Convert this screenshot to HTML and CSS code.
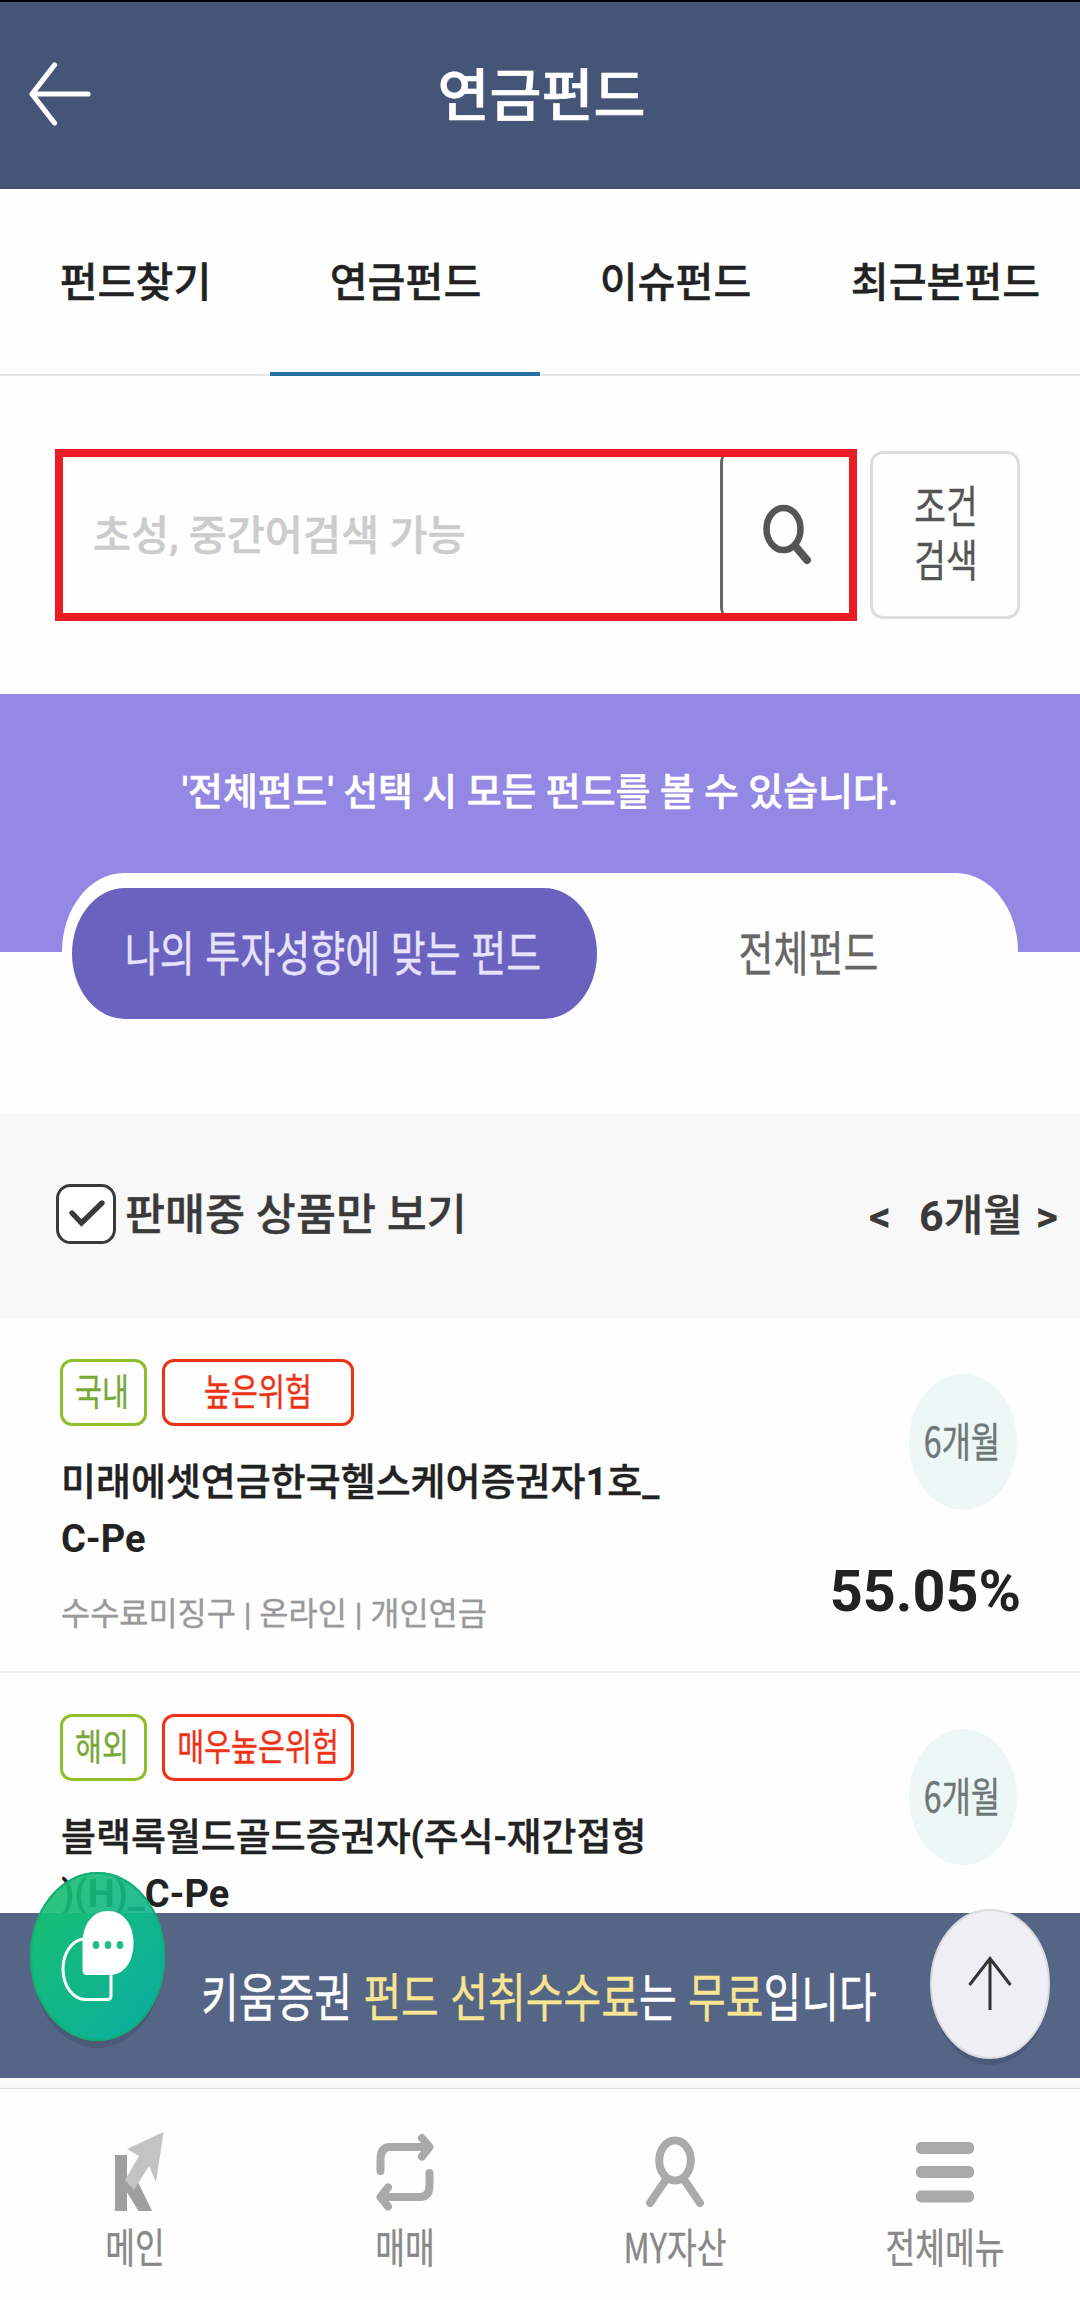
FILE: index.html
```html
<!DOCTYPE html>
<html lang="ko">
<head>
<meta charset="utf-8">
<title>연금펀드</title>
<link rel="stylesheet" href="styles.css">
</head>
<body>
<div class="app">
  <header class="header">
    <svg class="back" width="64" height="66" viewBox="0 0 64 66"><path d="M27.500 4 5 33l22.500 29M5 33h56" fill="none" stroke="#fff" stroke-width="5.200" stroke-linecap="round" stroke-linejoin="round"/></svg>
    <h1 class="title">연금펀드</h1>
  </header>

  <nav class="tabs">
    <a class="tab">펀드찾기</a>
    <a class="tab active">연금펀드</a>
    <a class="tab">이슈펀드</a>
    <a class="tab">최근본펀드</a>
  </nav>

  <section class="search">
    <div class="search-box">
      <span class="placeholder">초성, 중간어검색 가능</span>
      <span class="search-button">
        <svg width="52" height="64" viewBox="0 0 52 64"><ellipse cx="21.500" cy="26" rx="17" ry="21" fill="none" stroke="#555" stroke-width="6.500"/><path d="M34 44 45 57" stroke="#555" stroke-width="8" stroke-linecap="round"/></svg>
      </span>
    </div>
    <div class="condition"><span class="tall">조건<br>검색</span></div>
  </section>

  <section class="scope">
    <p class="notice">'전체펀드' 선택 시 모든 펀드를 볼 수 있습니다.</p>
    <div class="switch">
      <div class="option selected"><span class="tall">나의 투자성향에 맞는 펀드</span></div>
      <div class="option all"><span class="tall">전체펀드</span></div>
    </div>
  </section>

  <section class="filter">
    <svg class="checkbox" width="60" height="60" viewBox="0 0 60 60"><rect x="1.500" y="1.500" width="57" height="57" rx="13" fill="#fff" stroke="#3a3a3a" stroke-width="3"/><path d="M16 29l9.500 10L46 19" fill="none" stroke="#3a3a3a" stroke-width="5.400" stroke-linecap="round"/></svg>
    <span class="filter-label">판매중 상품만 보기</span>
    <span class="period"><b>&lt;</b><span class="months"><b>6</b>개월</span><b>&gt;</b></span>
  </section>

  <main class="list">
    <article class="fund">
      <div class="info">
        <div class="badges"><span class="badge region"><i class="tall">국내</i></span><span class="badge risk"><i class="tall">높은위험</i></span></div>
        <h2 class="name">미래에셋연금한국헬스케어증권자<b>1</b>호_<br><b>C-Pe</b></h2>
        <p class="meta">수수료미징구 | 온라인 | 개인연금</p>
      </div>
      <div class="yield"><span class="term"><i class="tall">6개월</i></span><strong class="rate">55.05%</strong></div>
    </article>
    <article class="fund">
      <div class="info">
        <div class="badges"><span class="badge region"><i class="tall">해외</i></span><span class="badge risk"><i class="tall">매우높은위험</i></span></div>
        <h2 class="name">블랙록월드골드증권자(주식-재간접형<br><b>)(H)_C-Pe</b></h2>
      </div>
      <div class="yield"><span class="term"><i class="tall">6개월</i></span></div>
    </article>
  </main>

  <aside class="banner">
    <p class="banner-text tall">키움증권 <em>펀드 선취수수료</em>는 <em>무료</em>입니다</p>
  </aside>

  <footer class="bottom-nav">
    <a class="nav-item">
      <svg width="60" height="84" viewBox="0 0 60 84"><path d="M10 26H22V82H10zM20 53 32 51 47 82H33.500L20 60z" fill="#9f9f9f"/><path d="M58.500 3 22 20l12 7L20 51l9 10 15-24 7 16z" fill="#c3c3c3"/></svg>
      <span class="tall">메인</span>
    </a>
    <a class="nav-item">
      <svg width="60" height="84" viewBox="0 0 60 84"><path d="M5.500 42V31Q5.500 18 15 18H54M47 9l7.500 9L47 27.500M54.500 44V56Q54.500 68 45 68H6M13 58.500 5.500 68l7.500 9.500" fill="none" stroke="#aaa" stroke-width="8" stroke-linecap="round" stroke-linejoin="round"/></svg>
      <span class="tall">매매</span>
    </a>
    <a class="nav-item">
      <svg width="60" height="84" viewBox="0 0 60 84"><ellipse cx="30" cy="31.500" rx="15.800" ry="20" fill="none" stroke="#aaa" stroke-width="8"/><path d="M20 52 5 74M40 52 55 74" fill="none" stroke="#aaa" stroke-width="8" stroke-linecap="round"/></svg>
      <span class="tall">MY자산</span>
    </a>
    <a class="nav-item">
      <svg width="60" height="84" viewBox="0 0 60 84"><g fill="#aaa"><rect x="1" y="13" width="58" height="12" rx="5"/><rect x="1" y="37" width="58" height="12" rx="5"/><rect x="1" y="61.500" width="58" height="12" rx="5"/></g></svg>
      <span class="tall">전체메뉴</span>
    </a>
  </footer>

  <svg class="chat" width="136" height="180" viewBox="0 0 136 180">
    <defs>
      <linearGradient id="green" x1="0" y1="0" x2="1" y2="1"><stop offset="0.150" stop-color="#18be73"/><stop offset="0.850" stop-color="#0baf9c"/></linearGradient>
      <clipPath id="above-banner"><rect width="136" height="41"/></clipPath>
      <clipPath id="over-banner"><rect y="41" width="136" height="139"/></clipPath>
    </defs>
    <ellipse cx="67.500" cy="92" rx="65" ry="84" fill="#485570" opacity=".7" clip-path="url(#over-banner)"/>
    <ellipse cx="67.500" cy="84.500" rx="67.500" ry="84.500" fill="url(#green)" clip-path="url(#over-banner)"/>
    <ellipse cx="67.500" cy="84.500" rx="67.500" ry="84.500" fill="url(#green)" opacity=".91" clip-path="url(#above-banner)"/>
    <ellipse cx="67.500" cy="84.500" rx="66.500" ry="83.500" fill="none" stroke="#13ad76" stroke-width="2"/>
    <path d="M53 67C41 69 33 82 33 97C33 114 43 127.500 56 127.500H77Q81 127.500 81 123.500V102" fill="none" stroke="#fff" stroke-width="3"/>
    <path d="M52.500 71C52.500 52 63 39 78 39C93 39 103.500 52 103.500 71C103.500 90 94 103 79 103H57Q52.500 103 52.500 98z" fill="#fff"/>
    <g fill="#22bd8b"><ellipse cx="66" cy="73" rx="3.300" ry="4"/><ellipse cx="78" cy="73" rx="3.300" ry="4"/><ellipse cx="90" cy="73" rx="3.300" ry="4"/></g>
  </svg>

  <svg class="to-top" width="120" height="160" viewBox="0 0 120 160">
    <ellipse cx="60" cy="81" rx="58" ry="75" fill="#4b5a79"/>
    <ellipse cx="60" cy="75" rx="59" ry="74" fill="#eeeff4" stroke="#d9dadd" stroke-width="2"/>
    <path d="M60 50V101M39.500 76 60 49.500 80.500 76" fill="none" stroke="#333" stroke-width="3"/>
  </svg>
</div>
</body>
</html>
```
FILE: styles.css
```css
* { box-sizing: border-box; margin: 0; padding: 0; }

body {
  width: 1080px;
  background: #fefefe;
  color: #222;
  font-family: Roboto, "Noto Sans CJK KR", sans-serif;
  font-weight: 500;
}

b { font-weight: 700; -webkit-text-stroke: 0; }

.app {
  position: relative;
  width: 1080px;
  height: 2300px;
  overflow: hidden;
  display: flex;
  flex-direction: column;
}

/* Labels drawn with condensed, tall letters */
.tall {
  display: block;
  font-family: "Noto Sans CJK KR", sans-serif;
  font-style: normal;
  font-weight: 400;
  white-space: nowrap;
  transform: scaleY(1.27);
  -webkit-text-stroke: 0.3px;
}

.header {
  flex: none;
  height: 189px;
  border-top: 2px solid #000;
  border-bottom: 2px solid #404c69;
  background: #445578;
  display: grid;
  grid-template-columns: 120px 1fr 120px;
  align-items: center;
}
.back { margin: -2px 0 0 27px; }
.title {
  padding: 4px 0 0 3px;
  color: #fff;
  font-size: 56.500px;
  font-weight: 500;
  line-height: 80px;
  text-align: center;
  -webkit-text-stroke: 0.6px;
}

.tabs {
  flex: none;
  height: 187px;
  display: grid;
  grid-template-columns: repeat(4, 1fr);
  box-shadow: inset 0 -2px #e5e5e5;
}
.tab {
  height: 187px;
  padding-left: 1px;
  font-size: 41.200px;
  line-height: 189px;
  text-align: center;
  white-space: nowrap;
  -webkit-text-stroke: 0.4px;
}
.tab.active { box-shadow: inset 0 -4px #2571a1; }

.search {
  flex: none;
  height: 318px;
  padding: 73px 60px 0 55px;
  display: flex;
  align-items: flex-start;
  gap: 13px;
}
.search-box {
  width: 802px;
  height: 172px;
  border: 8px solid #ed1c24;
  display: flex;
  justify-content: space-between;
  overflow: hidden;
}
.placeholder {
  padding-left: 30px;
  color: #ccc;
  font-size: 41.400px;
  line-height: 158px;
  -webkit-text-stroke: 0.5px;
}
.search-button {
  width: 129px;
  height: 172px;
  margin-top: -8px;
  border-left: 3px solid #666;
  border-radius: 14px;
  display: flex;
  align-items: center;
  padding-left: 39px;
}
.condition {
  width: 150px;
  height: 168px;
  margin-top: 2px;
  padding: 0 0 8px 2px;
  border: 3px solid #ddd;
  border-radius: 13px;
  color: #555;
  display: flex;
  align-items: center;
  justify-content: center;
  font-size: 34.500px;
  line-height: 41.500px;
}

.scope {
  flex: none;
  height: 419px;
  padding: 0 62px;
  background: linear-gradient(#9389e4 258px, #fefefe 258px);
}
.notice {
  height: 179px;
  color: #fff;
  font-size: 37.900px;
  line-height: 196px;
  text-align: center;
  white-space: nowrap;
  -webkit-text-stroke: 0.5px;
}
.switch {
  height: 156px;
  padding: 15px 10px 0;
  border-radius: 62px 62px 0 0 / 79px 79px 0 0;
  background: #fefefe;
  display: flex;
}
.option {
  flex: 1;
  height: 131px;
  display: flex;
  justify-content: center;
  color: #666;
  font-size: 38px;
  line-height: 125px;
}
.option.selected {
  flex: none;
  width: 525px;
  padding-right: 3px;
  border-radius: 53px / 65.500px;
  background: #6b61bf;
  color: #e6e3fa;
}
.option.all { padding-left: 12px; }

.filter {
  flex: none;
  height: 206px;
  padding: 0 22px 0 56px;
  background: #f8f8f8;
  color: #3a3a3a;
  display: flex;
  align-items: center;
  -webkit-text-stroke: 0.4px;
}
.checkbox { margin-top: -4px; }
.filter-label { margin-left: 9px; font-size: 43.500px; line-height: 206px; }
.period { margin-left: auto; display: flex; font-size: 43px; line-height: 210px; }
.months { margin: 0 13px 0 28px; }

.list {
  flex: none;
  height: 594px;
  overflow: hidden;
}
.fund {
  height: 354px;
  padding: 40px 63px 0 60px;
  border-bottom: 2px solid #eee;
  display: flex;
  justify-content: space-between;
}
.fund + .fund { padding-top: 41px; }
.badges { display: flex; gap: 15px; }
.badge {
  height: 67px;
  border: 3px solid;
  border-radius: 12px;
  display: flex;
  justify-content: center;
  font-size: 29.300px;
  line-height: 57px;
}
.region { width: 87px; padding-right: 3px; border-color: #8ebf2a; color: #78a837; }
.risk { width: 192px; border-color: #ee3215; color: #ee3215; }
.name {
  margin-top: 28px;
  padding-left: 1px;
  font-size: 38px;
  font-weight: 500;
  line-height: 57px;
  white-space: nowrap;
  -webkit-text-stroke: 0.4px;
}
.meta {
  margin-top: 23px;
  padding-left: 1px;
  color: #999;
  font-size: 31.700px;
  font-weight: 400;
  line-height: 48px;
  -webkit-text-stroke: 0.4px;
}
.yield {
  padding-top: 15px;
  display: flex;
  flex-direction: column;
  align-items: flex-end;
}
.term {
  width: 108px;
  height: 136px;
  padding-right: 2px;
  border-radius: 50%;
  background: #edf7f6;
  color: #6d7776;
  display: flex;
  justify-content: center;
  font-size: 32px;
  line-height: 132px;
}
.rate { margin: 47px -4px 0 0; font-size: 57.500px; font-weight: 700; line-height: 70px; }

.banner {
  flex: none;
  height: 165px;
  background: #556585;
  color: #fff;
}
.banner-text {
  padding-left: 201px;
  font-size: 41px;
  line-height: 162px;
}
.banner-text em { color: #f8e491; font-style: normal; }

.bottom-nav {
  flex: none;
  height: 222px;
  padding-top: 51px;
  background: linear-gradient(#fefefe, #f5f5f5 10px, #ddd 10px, #ddd 11px, #fefefe 11px);
  display: grid;
  grid-template-columns: repeat(4, 1fr);
}
.nav-item {
  display: flex;
  flex-direction: column;
  align-items: center;
  color: #888;
  font-size: 32.300px;
  line-height: 65px;
}

.chat { position: absolute; left: 30px; top: 1872px; }
.to-top { position: absolute; left: 930px; top: 1909px; }
```
